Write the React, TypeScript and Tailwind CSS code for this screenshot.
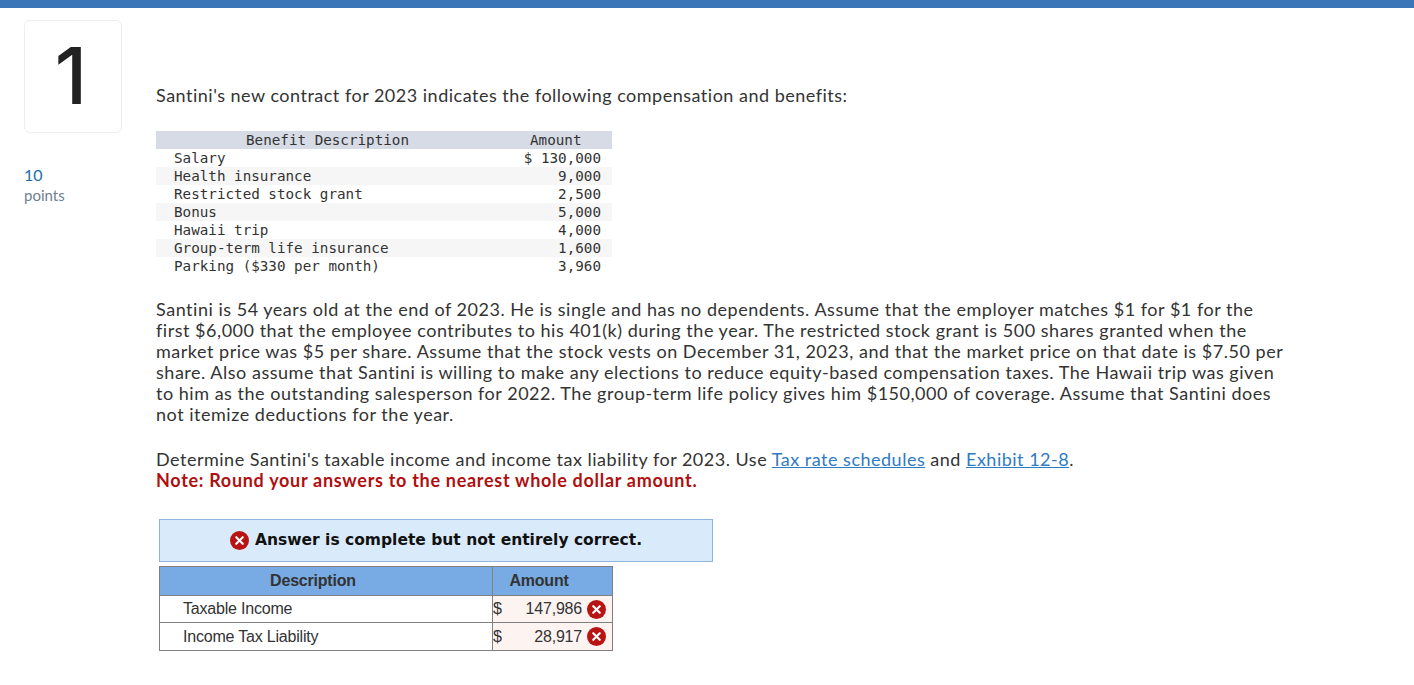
import { X } from 'lucide-react';

const benefits = [
  { name: 'Salary', amount: '$ 130,000' },
  { name: 'Health insurance', amount: '9,000' },
  { name: 'Restricted stock grant', amount: '2,500' },
  { name: 'Bonus', amount: '5,000' },
  { name: 'Hawaii trip', amount: '4,000' },
  { name: 'Group-term life insurance', amount: '1,600' },
  { name: 'Parking ($330 per month)', amount: '3,960' },
];

const paragraph = [
  'Santini is 54 years old at the end of 2023. He is single and has no dependents. Assume that the employer matches $1 for $1 for the',
  'first $6,000 that the employee contributes to his 401(k) during the year. The restricted stock grant is 500 shares granted when the',
  'market price was $5 per share. Assume that the stock vests on December 31, 2023, and that the market price on that date is $7.50 per',
  'share. Also assume that Santini is willing to make any elections to reduce equity-based compensation taxes. The Hawaii trip was given',
  'to him as the outstanding salesperson for 2022. The group-term life policy gives him $150,000 of coverage. Assume that Santini does',
  'not itemize deductions for the year.',
];

const answers = [
  { label: 'Taxable Income', value: '147,986' },
  { label: 'Income Tax Liability', value: '28,917' },
];

function ErrorIcon() {
  return (
    <span className="flex h-[19px] w-[19px] shrink-0 items-center justify-center rounded-full bg-[#b81414]">
      <X className="h-[13px] w-[13px] text-white" strokeWidth={4} />
    </span>
  );
}

export default function App() {
  return (
    <div className="min-h-[685px] bg-white font-['Lato',sans-serif] text-[#333]">
      <div className="h-2 bg-[#3b76b8]" />
      <div className="flex pl-6 pt-3">
        {/* Question number and points */}
        <div className="w-[132px] shrink-0">
          <div className="flex h-[113px] w-[98px] items-center justify-center rounded-md border border-[#eeeeee] pb-[2px] pr-[4px] font-['Inter',sans-serif] text-[78px] font-medium leading-none text-[#222]">
            1
          </div>
          <div className="mt-[31px] text-[16px] leading-[21px] text-[#1a6ea8]">10</div>
          <div className="text-[15px] leading-[21px] text-[#6f7f8f]">points</div>
        </div>

        <div className="pt-[63px]">
          <p className="text-[18px] leading-[24px] tracking-[0.5px] whitespace-nowrap">
            Santini's new contract for 2023 indicates the following compensation and benefits:
          </p>

          {/* Benefits table */}
          <div className="mt-[24px] w-[456px] font-['DejaVu_Sans_Mono',monospace] text-[14.25px] leading-[18px] text-[#333]">
            <div className="flex bg-[#d6dbe6]">
              <div className="w-[342px] pl-[90px]">Benefit Description</div>
              <div className="w-[114px] pl-[32px]">Amount</div>
            </div>
            {benefits.map((row, i) => (
              <div key={row.name} className={i % 2 === 1 ? 'flex bg-[#f6f6f6]' : 'flex'}>
                <div className="w-[342px] pl-[18px]">{row.name}</div>
                <div className="w-[103px] text-right">{row.amount}</div>
              </div>
            ))}
          </div>

          <div className="mt-[24px] text-[18px] leading-[21px] tracking-[0.52px] whitespace-nowrap">
            {paragraph.map((line) => (
              <div key={line}>{line}</div>
            ))}
          </div>

          <div className="mt-[24px] text-[18px] leading-[21px] tracking-[0.5px] whitespace-nowrap">
            <div>
              Determine Santini's taxable income and income tax liability for 2023. Use{' '}
              <a className="text-[#2f7bc4] underline">Tax rate schedules</a> and{' '}
              <a className="text-[#2f7bc4] underline">Exhibit 12-8</a>.
            </div>
            <div className="font-bold tracking-[0.7px] text-[#b00f0f]">Note: Round your answers to the nearest whole dollar amount.</div>
          </div>

          {/* Answer result */}
          <div className="ml-[3px] mt-[28px]">
            <div className="flex h-[43px] w-[554px] items-center justify-center gap-[6px] border border-[#8fb5de] bg-[#d9ebfa] font-['DejaVu_Sans',sans-serif] text-[15.5px] font-bold text-[#111]">
              <ErrorIcon />
              <span className="pt-[1px]">Answer is complete but not entirely correct.</span>
            </div>
            <table className="mt-[4px] w-[454px] border-collapse font-['Liberation_Sans',sans-serif] text-[16px] tracking-[-0.2px] text-[#333]">
              <thead>
                <tr className="h-[29px] bg-[#78abe3]">
                  <th className="w-[333px] border border-[#808080] pr-[26px] font-bold">Description</th>
                  <th className="border border-[#808080] pr-[27px] font-bold">Amount</th>
                </tr>
              </thead>
              <tbody>
                {answers.map((row) => (
                  <tr key={row.label} className="h-[27px] last:h-[28px]">
                    <td className="border border-[#808080] pl-[23px]">{row.label}</td>
                    <td className="border border-[#808080] bg-[#fdf4f2]">
                      <div className="flex items-center pr-[6px]">
                        <span>$</span>
                        <span className="flex-1 pr-[5px] text-right">{row.value}</span>
                        <ErrorIcon />
                      </div>
                    </td>
                  </tr>
                ))}
              </tbody>
            </table>
          </div>
        </div>
      </div>
    </div>
  );
}
